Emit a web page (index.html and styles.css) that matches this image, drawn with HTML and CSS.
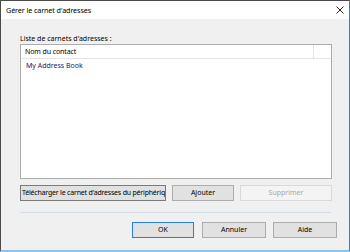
FILE: index.html
```html
<!DOCTYPE html>
<html lang="fr">
<head>
    <meta charset="UTF-8">
    <title>Gérer le carnet d'adresses</title>
    <link rel="stylesheet" href="styles.css">
</head>
<body>
    <div class="window">
        <div class="titlebar">
            <span class="title">Gérer le carnet d'adresses</span>
            <svg class="close" width="8" height="8" viewBox="0 0 8 8">
                <path d="M0.5 0.5 L7.5 7.5 M7.5 0.5 L0.5 7.5" stroke="#222" stroke-width="1" fill="none"/>
            </svg>
        </div>
        <div class="content">
            <div class="label">Liste de carnets d'adresses :</div>
            <div class="list">
                <div class="list-head">
                    <div class="col">Nom du contact</div>
                    <div class="col-rest"></div>
                </div>
                <div class="row">My Address Book</div>
            </div>
            <div class="actions">
                <button class="btn btn-download">Télécharger le carnet d'adresses du périphérique</button>
                <button class="btn btn-add">Ajouter</button>
                <button class="btn btn-remove" disabled>Supprimer</button>
            </div>
            <div class="sep"></div>
            <div class="footer">
                <button class="btn btn-ok">OK</button>
                <button class="btn btn-cancel">Annuler</button>
                <button class="btn btn-help">Aide</button>
            </div>
        </div>
    </div>
</body>
</html>
```

FILE: styles.css
```css
body { margin: 0; font-family: "Noto Sans", sans-serif; font-size: 7px; color: #000; background: #fff; }
.window { width: 348px; height: 249px; border-left: 1px solid #4a4a4a; border-top: 1px solid #4a4a4a; border-right: 1px solid #2a86d6; border-bottom: 2px solid #8cc4ee; background: #f0f0f0; display: flex; flex-direction: column; }
.titlebar { height: 18px; background: #fff; display: flex; align-items: center; justify-content: space-between; padding: 0 5px 0 5px; }
.title { line-height: 12px; font-size: 7.2px; letter-spacing: -0.1px; }
.close { margin-top: -1px; }
.content { flex: 1; padding: 15px 0 0 19px; display: flex; flex-direction: column; }
.label { line-height: 10px; height: 10px; }
.list { width: 310px; height: 133px; border: 1px solid #adadad; background: #fff; }
.list-head { display: flex; height: 13px; border-bottom: 1px solid #e5e5e5; }
.col { width: 288px; padding-left: 4px; line-height: 14px; border-right: 1px solid #e5e5e5; letter-spacing: -0.1px; }
.col-rest { flex: 1; }
.row { padding: 2px 0 0 5px; line-height: 10px; color: #1a1a6a; }
.actions { display: flex; gap: 6px; margin-top: 6px; }
.btn { font-family: "Noto Sans", sans-serif; font-size: 7px; height: 16px; padding: 0; margin: 0; background: #e1e1e1; border: 1px solid #adadad; color: #000; line-height: 12px; white-space: nowrap; overflow: hidden; }
.btn-download { width: 146px; border-color: #7a7a7a; text-align: left; padding-left: 1px; letter-spacing: -0.2px; }
.btn-add { width: 62px; }
.btn-remove { width: 92px; background: #f4f4f4; border-color: #d9d9d9; color: #a8a8a8; }
.sep { width: 311px; height: 1px; background: #d3dde7; margin-top: 11px; }
.footer { display: flex; justify-content: flex-end; gap: 7px; margin-top: 9px; padding-right: 12px; }
.btn-ok { width: 62px; border-color: #2a7fd4; margin-right: 1px; }
.btn-cancel { width: 64px; }
.btn-help { width: 64px; }
```
